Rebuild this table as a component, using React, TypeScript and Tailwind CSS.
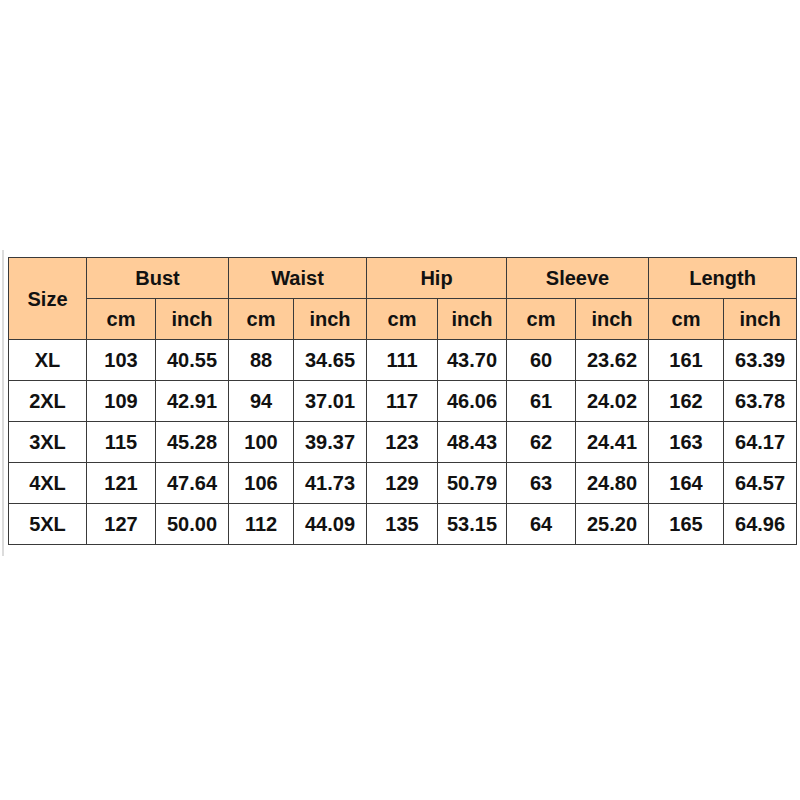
import React from "react";

const widths = [78, 69, 73, 65, 73, 71, 69, 69, 73, 75, 73];
const groups = ["Bust", "Waist", "Hip", "Sleeve", "Length"];
const rows: string[][] = [
  ["XL", "103", "40.55", "88", "34.65", "111", "43.70", "60", "23.62", "161", "63.39"],
  ["2XL", "109", "42.91", "94", "37.01", "117", "46.06", "61", "24.02", "162", "63.78"],
  ["3XL", "115", "45.28", "100", "39.37", "123", "48.43", "62", "24.41", "163", "64.17"],
  ["4XL", "121", "47.64", "106", "41.73", "129", "50.79", "63", "24.80", "164", "64.57"],
  ["5XL", "127", "50.00", "112", "44.09", "135", "53.15", "64", "25.20", "165", "64.96"],
];

export default function App() {
  const cell = "border border-[#3a3a3a] text-center align-middle p-0 h-[41px]";
  return (
    <div className="w-[800px] h-[800px] bg-white pt-[250px]" style={{ fontFamily: '"Liberation Sans", Arial, sans-serif' }}>
      <div className="flex items-start">
        <div className="ml-[2px] w-[2px] h-[306px] bg-[#dcdcdc]" />
        <table className="ml-[4px] mt-[7px] border-collapse table-fixed text-[20px] font-bold text-[#111] w-[788px]">
          <colgroup>
            {widths.map((w, i) => (
              <col key={i} style={{ width: w }} />
            ))}
          </colgroup>
          <tbody>
            <tr className="bg-[#ffcc99]">
              <td rowSpan={2} className={cell}>Size</td>
              {groups.map((g) => (
                <td key={g} colSpan={2} className={cell}>{g}</td>
              ))}
            </tr>
            <tr className="bg-[#ffcc99]">
              {groups.map((g) => (
                <React.Fragment key={g}>
                  <td className={cell}>cm</td>
                  <td className={cell}>inch</td>
                </React.Fragment>
              ))}
            </tr>
            {rows.map((r, i) => (
              <tr key={i}>
                {r.map((v, j) => (
                  <td key={j} className={cell}>{v}</td>
                ))}
              </tr>
            ))}
          </tbody>
        </table>
      </div>
    </div>
  );
}
